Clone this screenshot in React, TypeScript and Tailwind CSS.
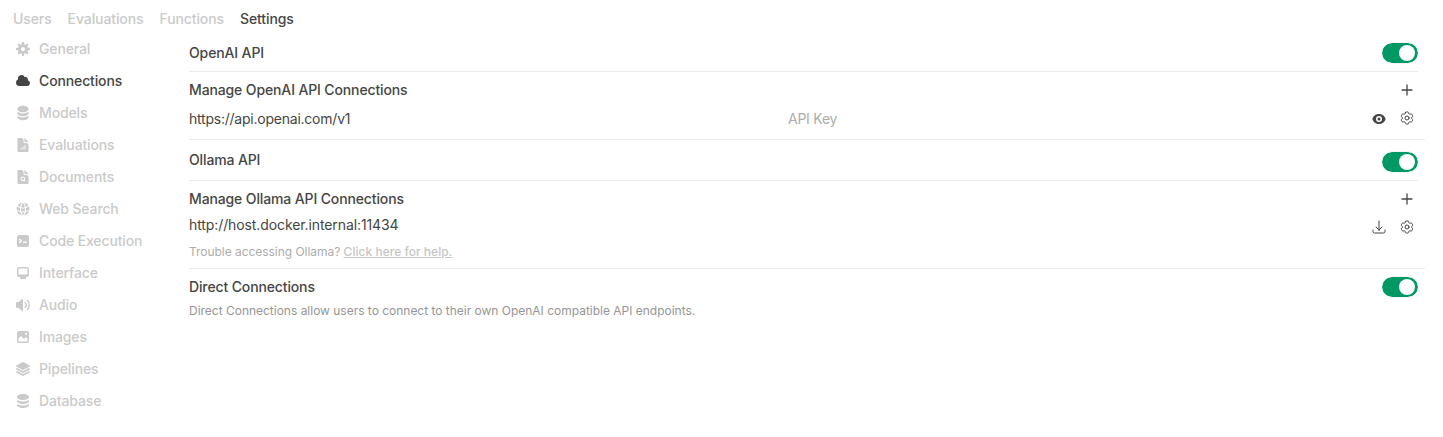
import type { ReactNode } from "react";
import {
  HiDocumentChartBar,
  HiDocumentMagnifyingGlass,
  HiGlobeAlt,
  HiOutlineArrowDownTray,
  HiOutlineCog6Tooth,
  HiSquare3Stack3D,
} from "react-icons/hi2";

function Solid({ d, box = 16, className = "size-4" }: { d: string; box?: number; className?: string }) {
  return (
    <svg viewBox={`0 0 ${box} ${box}`} fill="currentColor" className={className}>
      <path fillRule="evenodd" clipRule="evenodd" d={d} />
    </svg>
  );
}

const COG =
  "M6.955 1.45A.5.5 0 0 1 7.452 1h1.096a.5.5 0 0 1 .497.45l.17 1.699c.484.12.94.312 1.356.562l1.321-1.081a.5.5 0 0 1 .67.033l.774.775a.5.5 0 0 1 .034.67l-1.08 1.32c.25.417.44.873.561 1.357l1.699.17a.5.5 0 0 1 .45.497v1.096a.5.5 0 0 1-.45.497l-1.699.17c-.12.484-.312.94-.562 1.356l1.082 1.322a.5.5 0 0 1-.034.67l-.774.774a.5.5 0 0 1-.67.033l-1.322-1.08c-.416.25-.872.44-1.356.561l-.17 1.699a.5.5 0 0 1-.497.45H7.452a.5.5 0 0 1-.497-.45l-.17-1.699a4.973 4.973 0 0 1-1.356-.562L4.108 13.37a.5.5 0 0 1-.67-.033l-.774-.775a.5.5 0 0 1-.034-.67l1.08-1.32a4.971 4.971 0 0 1-.561-1.357l-1.699-.17A.5.5 0 0 1 1 8.548V7.452a.5.5 0 0 1 .45-.497l1.699-.17c.12-.484.312-.94.562-1.356L2.629 4.107a.5.5 0 0 1 .034-.67l.774-.774a.5.5 0 0 1 .67-.033L5.43 3.71a4.97 4.97 0 0 1 1.356-.561l.17-1.699ZM6 8c0 .538.212 1.026.558 1.385l.057.057a2 2 0 0 0 2.828-2.828l-.058-.056A2 2 0 0 0 6 8Z";
const CLOUD =
  "M1 9.5A3.5 3.5 0 0 0 4.5 13H12a3 3 0 0 0 .917-5.857 2.503 2.503 0 0 0-3.198-3.019 3.5 3.5 0 0 0-6.628 2.171A3.5 3.5 0 0 0 1 9.5Z";
const STACK =
  "M10 1c3.866 0 7 1.79 7 4s-3.134 4-7 4-7-1.79-7-4 3.134-4 7-4zm5.694 8.13c.464-.264.91-.583 1.306-.952V10c0 2.21-3.134 4-7 4s-7-1.79-7-4V8.178c.396.37.842.688 1.306.953C5.838 10.006 7.854 10.5 10 10.5s4.162-.494 5.694-1.37zM3 13.179V15c0 2.21 3.134 4 7 4s7-1.79 7-4v-1.822c-.396.37-.842.688-1.306.953-1.532.875-3.548 1.369-5.694 1.369s-4.162-.494-5.694-1.37A7.009 7.009 0 013 13.179z";
const DATABASE =
  "M8 7c3.314 0 6-1.343 6-3s-2.686-3-6-3-6 1.343-6 3 2.686 3 6 3ZM8 8.5c1.84 0 3.579-.37 4.914-1.037A6.33 6.33 0 0 0 14 6.78V8c0 1.657-2.686 3-6 3S2 9.657 2 8V6.78c.346.273.72.5 1.087.683C4.42 8.131 6.16 8.5 8 8.5ZM8 12.5c1.84 0 3.579-.37 4.914-1.037.366-.183.74-.41 1.086-.684V12c0 1.657-2.686 3-6 3s-6-1.343-6-3v-1.22c.346.273.72.5 1.087.683C4.42 12.131 6.16 12.5 8 12.5Z";
const TERMINAL =
  "M2 4a2 2 0 0 1 2-2h8a2 2 0 0 1 2 2v8a2 2 0 0 1-2 2H4a2 2 0 0 1-2-2V4Zm2.22 1.97a.75.75 0 0 0 0 1.06l.97.97-.97.97a.75.75 0 1 0 1.06 1.06l1.5-1.5a.75.75 0 0 0 0-1.06l-1.5-1.5a.75.75 0 0 0-1.06 0ZM8.75 8.5a.75.75 0 0 0 0 1.5h2.5a.75.75 0 0 0 0-1.5h-2.5Z";
const DESKTOP =
  "M2 4.25A2.25 2.25 0 0 1 4.25 2h7.5A2.25 2.25 0 0 1 14 4.25v5.5A2.25 2.25 0 0 1 11.75 12h-1.312c.1.128.21.248.328.36a.75.75 0 0 1 .234.545v.345a.75.75 0 0 1-.75.75h-4.5a.75.75 0 0 1-.75-.75v-.345a.75.75 0 0 1 .234-.545c.118-.111.228-.232.328-.36H4.25A2.25 2.25 0 0 1 2 9.75v-5.5Zm2.25-.75a.75.75 0 0 0-.75.75v4.5c0 .414.336.75.75.75h7.5a.75.75 0 0 0 .75-.75v-4.5a.75.75 0 0 0-.75-.75h-7.5Z";
const SPEAKER =
  "M7.557 2.066A.75.75 0 0 1 8 2.75v10.5a.75.75 0 0 1-1.248.56L3.59 11H2a1 1 0 0 1-1-1V6a1 1 0 0 1 1-1h1.59l3.162-2.81a.75.75 0 0 1 .805-.124ZM12.95 3.05a.75.75 0 1 0-1.06 1.06 5.5 5.5 0 0 1 0 7.78.75.75 0 1 0 1.06 1.06 7 7 0 0 0 0-9.9ZM10.828 5.172a.75.75 0 1 0-1.06 1.06 2.5 2.5 0 0 1 0 3.536.75.75 0 1 0 1.06 1.06 4 4 0 0 0 0-5.656Z";
const PHOTO =
  "M2 4a2 2 0 0 1 2-2h8a2 2 0 0 1 2 2v8a2 2 0 0 1-2 2H4a2 2 0 0 1-2-2V4Zm10.5 5.707a.5.5 0 0 0-.146-.353l-1-1a.5.5 0 0 0-.708 0L9.354 9.646a.5.5 0 0 1-.708 0L6.354 7.354a.5.5 0 0 0-.708 0l-2 2a.5.5 0 0 0-.146.353V12a.5.5 0 0 0 .5.5h8a.5.5 0 0 0 .5-.5V9.707ZM12 5a1 1 0 1 1-2 0 1 1 0 0 1 2 0Z";
const EYE =
  "M8 9.5a1.5 1.5 0 1 0 0-3 1.5 1.5 0 0 0 0 3ZM1.38 8.28a.87.87 0 0 1 0-.566 7.003 7.003 0 0 1 13.238.006.87.87 0 0 1 0 .566A7.003 7.003 0 0 1 1.379 8.28ZM11 8a3 3 0 1 1-6 0 3 3 0 0 1 6 0Z";

const tabs = ["Users", "Evaluations", "Functions", "Settings"];

const items: { label: string; icon: ReactNode }[] = [
  { label: "General", icon: <Solid d={COG} /> },
  { label: "Connections", icon: <Solid d={CLOUD} /> },
  { label: "Models", icon: <Solid d={STACK} box={20} /> },
  { label: "Evaluations", icon: <HiDocumentChartBar className="size-4" /> },
  { label: "Documents", icon: <HiDocumentMagnifyingGlass className="size-4" /> },
  { label: "Web Search", icon: <HiGlobeAlt className="size-4" /> },
  { label: "Code Execution", icon: <Solid d={TERMINAL} /> },
  { label: "Interface", icon: <Solid d={DESKTOP} /> },
  { label: "Audio", icon: <Solid d={SPEAKER} /> },
  { label: "Images", icon: <Solid d={PHOTO} /> },
  { label: "Pipelines", icon: <HiSquare3Stack3D className="size-4" /> },
  { label: "Database", icon: <Solid d={DATABASE} /> },
];

function Toggle() {
  return (
    <button className="flex h-5 w-9 shrink-0 items-center justify-end rounded-full bg-[#009966] px-[3px] outline outline-1 outline-gray-100">
      <span className="size-4 rounded-full bg-white" />
    </button>
  );
}

function Plus() {
  return (
    <svg viewBox="0 0 16 16" fill="none" stroke="currentColor" strokeWidth="1.3" strokeLinecap="round" className="mr-[3px] size-4">
      <path d="M8 3v10M3 8h10" />
    </svg>
  );
}

export default function App() {
  return (
    <div className="h-[437px] w-full overflow-hidden bg-white font-['Inter',sans-serif] text-sm font-medium tracking-[-0.13px] text-[#454545]">
      <nav className="flex h-[33px] gap-4 pl-[13px] pt-[9px] leading-5 tracking-[-0.1px]">
        {tabs.map((t) => (
          <a key={t} className={t === "Settings" ? "" : "text-[#cacaca]"}>{t}</a>
        ))}
      </nav>
      <div className="flex">
        <aside className="w-[189px] shrink-0 pl-[15px]">
          {items.map(({ label, icon }) => (
            <div key={label} className={`flex h-8 items-center gap-2 ${label === "Connections" ? "" : "text-[#cacaca]"}`}>
              {icon}
              <span className="leading-5">{label}</span>
            </div>
          ))}
        </aside>
        <main className="w-[1236px] shrink-0">
          <div className="mr-[7px] flex h-[39px] items-center justify-between border-b border-[#ebebeb] pt-px">
            <span>OpenAI API</span>
            <Toggle />
          </div>
          <section className="h-[68px] border-b border-[#ebebeb] pt-2">
            <div className="mr-[7px] flex h-5 items-center justify-between">
              <span>Manage OpenAI API Connections</span>
              <Plus />
            </div>
            <div className="mr-[7px] mt-[9px] flex h-5 items-center font-normal">
              <span className="w-[599px] tracking-[-0.23px]">https://api.openai.com/v1</span>
              <span className="flex-1 tracking-[-0.25px] text-[#adadad]">API Key</span>
              <Solid d={EYE} className="mr-3 size-4" />
              <HiOutlineCog6Tooth className="mr-[3px] mb-0.5 size-4" />
            </div>
          </section>
          <div className="mr-[7px] flex h-[41px] items-start justify-between border-b border-[#ebebeb]">
            <span className="mt-[10px] leading-5">Ollama API</span>
            <div className="mt-3"><Toggle /></div>
          </div>
          <section className="h-[88px] border-b border-[#ebebeb] pt-2">
            <div className="mr-[7px] flex h-5 items-center justify-between">
              <span>Manage Ollama API Connections</span>
              <Plus />
            </div>
            <div className="mr-[7px] mt-1.5 flex h-5 items-center font-normal">
              <span className="flex-1 tracking-[-0.1px]">http://host.docker.internal:11434</span>
              <HiOutlineArrowDownTray className="mr-3 mt-[3px] size-4" />
              <HiOutlineCog6Tooth className="mr-[3px] mt-[3px] size-4" />
            </div>
            <div className="mt-[9px] text-xs leading-4 font-normal tracking-[-0.04px] text-[#adadad]">
              Trouble accessing Ollama? <a className="font-medium tracking-[0.02px] text-[#c6c6c6] underline">Click here for help.</a>
            </div>
          </section>
          <div className="mr-[7px] mt-2 flex h-5 items-center justify-between">
            <span>Direct Connections</span>
            <Toggle />
          </div>
          <p className="mt-1.5 text-xs leading-4 font-normal tracking-[-0.012px] text-[#969696]">
            Direct Connections allow users to connect to their own OpenAI compatible API endpoints.
          </p>
        </main>
      </div>
    </div>
  );
}
